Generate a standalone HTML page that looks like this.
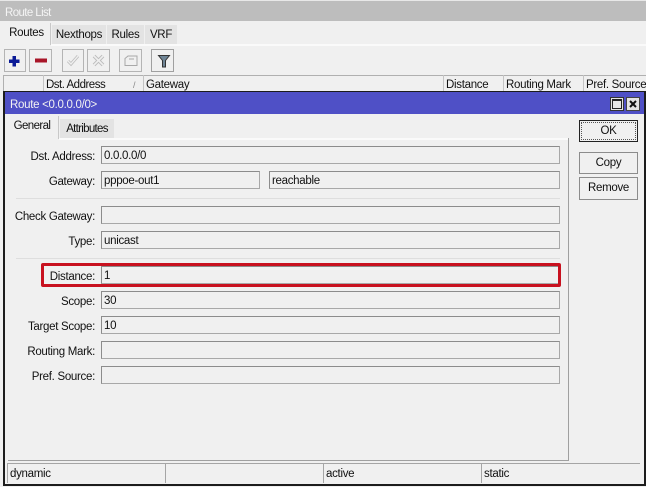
<!DOCTYPE html>
<html><head><meta charset="utf-8">
<style>
html,body{margin:0;padding:0;background:#f0f0f0}
#w{width:646px;height:487px;position:relative;overflow:hidden;background:#f0f0f0;font-family:"Liberation Sans",sans-serif;font-size:11.5px;letter-spacing:-.3px;color:#111;filter:blur(.3px)}
.a{position:absolute;box-sizing:border-box}
.t{position:absolute;white-space:nowrap;line-height:14px}
.l{position:absolute;white-space:nowrap;line-height:14px;text-align:right;right:551px}
.f{position:absolute;box-sizing:border-box;left:101px;width:459px;height:18px;border:1px solid #a8a8a8;border-left-color:#8c8c8c;border-top-color:#8c8c8c;background:#f0f0f0;padding-left:2px;padding-top:1px;line-height:16px}
.b{position:absolute;box-sizing:border-box;top:49px;height:23px;border:1px solid #b4b4b4;background:#f0f0f0}
.tab{position:absolute;box-sizing:border-box;background:#e3e3e3;text-align:center;line-height:21px}
.btn{position:absolute;box-sizing:border-box;left:579px;width:59px;height:22px;border:1px solid #8c8c8c;text-align:center;line-height:21px;background:#f0f0f0}
.s{position:absolute;box-sizing:border-box;top:463px;height:20px;border-top:1px solid #a5a5a5;border-left:1px solid #a5a5a5;padding-left:2px;line-height:20px}
.h{position:absolute;top:75px;height:17px;width:1px;background:#c4c4c4}
</style></head><body><div id="w">
<div class="a" style="left:0;top:0;width:646px;height:1px;background:#e8e8e8"></div>
<div class="a" style="left:0;top:1px;width:646px;height:20px;background:#bdbdbd"></div>
<div class="t" style="left:5px;top:6px;color:#f4f4f4;letter-spacing:-.6px">Route List</div>

<div class="tab" style="left:3px;top:23px;width:48px;height:22px;background:#f0f0f0;border-right:1px solid #c8c8c8;line-height:20px">Routes</div>
<div class="tab" style="left:52px;top:25px;width:54px;height:19px">Nexthops</div>
<div class="tab" style="left:107px;top:25px;width:37px;height:19px">Rules</div>
<div class="tab" style="left:145px;top:25px;width:32px;height:19px">VRF</div>
<div class="a" style="left:51px;top:44px;width:595px;height:2px;background:#fafafa"></div>

<div class="b" style="left:4px;width:22px"><svg width="20" height="21" style="display:block"><path d="M7.500 6h3.500v3.500h3.500v3.500H11v3.500H7.500V13H4V9.500h3.500z" fill="#0a1a96"/></svg></div>
<div class="b" style="left:29px;width:23px"><svg width="21" height="21" style="display:block"><rect x="5" y="8.500" width="12" height="4" fill="#a81528"/></svg></div>
<div class="b" style="left:62px;width:22px"><svg width="20" height="21" style="display:block"><path d="M5 11l3 3 7-8" fill="none" stroke="#bdbdbd" stroke-width="3"/><path d="M5 11l3 3 7-8" fill="none" stroke="#efefef" stroke-width="1.400"/></svg></div>
<div class="b" style="left:87px;width:23px"><svg width="21" height="21" style="display:block"><path d="M6 6l9 9M15 6l-9 9" stroke="#bdbdbd" stroke-width="3.600"/><path d="M6 6l9 9M15 6l-9 9" stroke="#efefef" stroke-width="1.600"/></svg></div>
<div class="b" style="left:119px;width:23px"><svg width="21" height="21" style="display:block"><path d="M5 8.500L8 6h9v9.500H5zM9 9h5" fill="none" stroke="#a8a8a8" stroke-width="1"/></svg></div>
<div class="b" style="left:151px;width:23px;border-color:#a0a0a0"><svg width="21" height="21" style="display:block"><path d="M6.500 5.500h11l-4 5V17h-3v-6.500z" fill="#6f8596" stroke="#333" stroke-width="1"/></svg></div>

<div class="a" style="left:3px;top:75px;width:643px;height:1px;background:#b0b0b0"></div>
<div class="a" style="left:3px;top:75px;width:1px;height:17px;background:#b0b0b0"></div>
<div class="h" style="left:43px"></div><div class="h" style="left:143px"></div><div class="h" style="left:443px"></div><div class="h" style="left:503px"></div><div class="h" style="left:583px"></div>
<div class="t" style="left:46px;top:78px;letter-spacing:-.5px">Dst. Address</div>
<div class="t" style="left:133px;top:78px;color:#888;font-size:9px">/</div>
<div class="t" style="left:146px;top:78px">Gateway</div>
<div class="t" style="left:446px;top:78px">Distance</div>
<div class="t" style="left:506px;top:78px">Routing Mark</div>
<div class="t" style="left:586px;top:78px">Pref. Source</div>

<div class="a" style="left:3px;top:91px;width:643px;height:395px;border:2px solid #1c1c1c;border-top-width:1px;background:#f0f0f0"></div>
<div class="a" style="left:5px;top:92px;width:639px;height:22px;background:#4f50c6"></div>
<div class="t" style="left:10px;top:98px;color:#f2f2f2">Route &lt;0.0.0.0/0&gt;</div>
<div class="a" style="left:610px;top:97px;width:14px;height:14px;background:#e4e4e4;border:1px solid #333"><div class="a" style="left:1px;top:1px;width:10px;height:10px;border:1px solid #222;border-top-width:2px"></div></div>
<div class="a" style="left:626px;top:97px;width:14px;height:14px;background:#e4e4e4;border:1px solid #444"><svg width="12" height="12" style="display:block"><path d="M3 3l6 6M9 3l-6 6" stroke="#111" stroke-width="2"/></svg></div>

<div class="tab" style="left:6px;top:116px;width:53px;height:23px;background:#f0f0f0;border-right:1px solid #c8c8c8;letter-spacing:-.6px">General</div>
<div class="tab" style="left:60px;top:119px;width:54px;height:19px;letter-spacing:-.7px">Attributes</div>
<div class="a" style="left:59px;top:138px;width:509px;height:2px;background:#fafafa"></div>
<div class="a" style="left:568px;top:138px;width:1px;height:323px;background:#a0a0a0"></div>
<div class="a" style="left:8px;top:460px;width:561px;height:1px;background:#a0a0a0"></div>

<div class="l" style="top:150px">Dst. Address:</div><div class="f" style="top:146px">0.0.0.0/0</div>
<div class="l" style="top:175px">Gateway:</div><div class="f" style="top:171px;width:159px">pppoe-out1</div><div class="f" style="top:171px;left:269px;width:291px">reachable</div>
<div class="a" style="left:16px;top:198px;width:544px;height:1px;background:#dedede"></div>
<div class="l" style="top:210px">Check Gateway:</div><div class="f" style="top:206px"></div>
<div class="l" style="top:235px">Type:</div><div class="f" style="top:231px">unicast</div>
<div class="a" style="left:16px;top:258px;width:544px;height:1px;background:#dedede"></div>
<div class="l" style="top:270px">Distance:</div><div class="f" style="top:266px">1</div>
<div class="l" style="top:295px">Scope:</div><div class="f" style="top:291px">30</div>
<div class="l" style="top:320px">Target Scope:</div><div class="f" style="top:316px">10</div>
<div class="l" style="top:345px">Routing Mark:</div><div class="f" style="top:341px"></div>
<div class="l" style="top:370px">Pref. Source:</div><div class="f" style="top:366px"></div>

<div class="a" style="left:41px;top:263px;width:520px;height:24px;border:3px solid #c8111f;border-radius:2px"></div>

<div class="btn" style="top:120px;border-color:#222"><div class="a" style="left:1px;top:1px;width:55px;height:18px;border:1px dotted #555"></div>OK</div>
<div class="btn" style="top:152px">Copy</div>
<div class="btn" style="top:177px;height:23px">Remove</div>

<div class="a" style="left:7px;top:463px;width:633px;height:1px;background:#a5a5a5"></div>
<div class="s" style="left:7px;width:157px">dynamic</div>
<div class="s" style="left:165px;width:158px"></div>
<div class="s" style="left:323px;width:158px">active</div>
<div class="s" style="left:481px;width:159px">static</div>
</div></body></html>
